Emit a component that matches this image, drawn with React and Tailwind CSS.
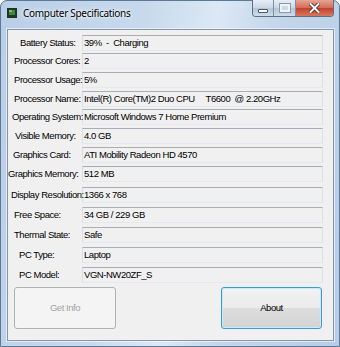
import React from "react";

const rows = [
  { label: "Battery Status:", value: "39%  -  Charging", pl: "pl-[12px]", mt: "mt-[5px]" },
  { label: "Processor Cores:", value: "2", pl: "pl-[6px]", mt: "mt-[2px]" },
  { label: "Processor Usage:", value: "5%", pl: "pl-[6px]", mt: "mt-[3px]" },
  { label: "Processor Name:", value: "Intel(R) Core(TM)2 Duo CPU     T6600  @ 2.20GHz", pl: "pl-[6px]", mt: "mt-[3px]" },
  { label: "Operating System:", value: "Microsoft Windows 7 Home Premium", pl: "pl-[4px]", mt: "mt-[2px]" },
  { label: "Visible Memory:", value: "4.0 GB", pl: "pl-[7px]", mt: "mt-[3px]" },
  { label: "Graphics Card:", value: "ATI Mobility Radeon HD 4570", pl: "pl-[5px]", mt: "mt-[3px]" },
  { label: "Graphics Memory:", value: "512 MB", pl: "pl-[0px]", mt: "mt-[3px]" },
  { label: "Display Resolution:", value: "1366 x 768", pl: "pl-[3px]", mt: "mt-[5px]" },
  { label: "Free Space:", value: "34 GB / 229 GB", pl: "pl-[6px]", mt: "mt-[4px]" },
  { label: "Thermal State:", value: "Safe", pl: "pl-[6px]", mt: "mt-[4px]" },
  { label: "PC Type:", value: "Laptop", pl: "pl-[11px]", mt: "mt-[4px]" },
  { label: "PC Model:", value: "VGN-NW20ZF_S", pl: "pl-[11px]", mt: "mt-[4px]" },
];

function AppIcon() {
  return (
    <svg width="10" height="10" viewBox="0 0 10 10">
      <rect x="0.5" y="0.5" width="9" height="9" fill="#1d3a22" stroke="#2a2a2a" />
      <rect x="2" y="2" width="6" height="5" fill="#3f8a3a" />
      <rect x="2" y="2" width="3" height="2" fill="#7cc46a" />
    </svg>
  );
}

export default function App() {
  return (
    <div className="w-[340px] h-[347px] overflow-hidden bg-white">
      <div className="w-[340px] h-[347px] flex flex-col rounded-t-[7px] border border-[#5d7796] bg-[linear-gradient(100deg,#b9cfe7_0%,#c6d8ec_35%,#dce8f4_55%,#c3d6ea_70%,#b7cde6_100%)] font-['Liberation_Sans',sans-serif]">
        {/* title bar */}
        <div className="h-[28px] flex items-start relative">
          <div className="mt-[7px] ml-[6px]">
            <AppIcon />
          </div>
          <div className="ml-[6px] mt-[5px] text-[10px] tracking-[-0.3px] leading-[14px] text-black font-['Noto_Sans',sans-serif] [text-shadow:0_0_6px_rgba(255,255,255,1),0_0_3px_rgba(255,255,255,1)]">
            Computer Specifications
          </div>
          <div className="absolute top-[-1px] right-[5px] flex h-[17px] rounded-b-[4px] border border-t-0 border-[#5e6f82] overflow-hidden">
            <div className="w-[21px] h-full flex items-end justify-center pb-[3px] bg-[linear-gradient(#e6eef6,#c9d7e6_50%,#b3c5d8_51%,#cfdcea)] border-r border-[#7d8ea2]">
              <div className="w-[10px] h-[4px] bg-white border border-[#4a5766] rounded-[1px]" />
            </div>
            <div className="w-[22px] h-full flex items-center justify-center bg-[linear-gradient(#e6eef6,#c9d7e6_50%,#b3c5d8_51%,#cfdcea)] border-r border-[#7d8ea2]">
              <div className="w-[10px] h-[8px] border-[2px] border-[#eef3f8] outline outline-1 outline-[#8a98a8] bg-[#cfd9e4]" />
            </div>
            <div className="w-[37px] h-full flex items-center justify-center bg-[linear-gradient(#e8a493,#d46a55_50%,#c2412b_51%,#d9765e)]">
              <svg width="11" height="10" viewBox="0 0 11 10">
                <path d="M1.5 1 L9.5 9 M9.5 1 L1.5 9" stroke="#4a2020" strokeWidth="3.6" strokeLinecap="square" />
                <path d="M1.5 1 L9.5 9 M9.5 1 L1.5 9" stroke="#ffffff" strokeWidth="2" strokeLinecap="square" />
              </svg>
            </div>
          </div>
        </div>
        {/* body */}
        <div className="flex flex-1 pl-[6px] pr-[5px] pb-[5px]">
          <div className="flex-1 flex flex-col bg-[#f0f0f0] border border-[#8596ab] shadow-[0_0_0_1px_rgba(255,255,255,0.55)] text-[9.5px] tracking-[-0.45px] text-black">
            {rows.map((r) => (
              <div key={r.label} className={"flex items-center h-[16px] " + r.mt}>
                <div className={"relative z-10 w-[74px] shrink-0 whitespace-nowrap leading-[12px] " + r.pl}>{r.label}</div>
                <div className="w-[241px] h-[16px] shrink-0 flex items-center pl-[1px] whitespace-pre border border-t-[#abadb3] border-l-[#dbdfe6] border-r-[#dbdfe6] border-b-[#e3e9ef] bg-[#f0f0f0] leading-[12px]">
                  {r.value}
                </div>
              </div>
            ))}
            <div className="flex justify-between mt-[4px] pl-[6px] pr-[11px]">
              <div className="w-[102px] h-[42px] flex items-center justify-center rounded-[3px] border border-[#adb2b5] bg-[#f4f4f4] text-[#a3a3a3]">
                Get Info
              </div>
              <div className="w-[101px] h-[42px] flex items-center justify-center rounded-[3px] border border-[#3c9ad6] shadow-[inset_0_0_0_1px_#c8eaf9] bg-[linear-gradient(#f2f2f2,#ebebeb_50%,#dddddd_51%,#d3d3d3)] text-black">
                About
              </div>
            </div>
          </div>
        </div>
      </div>
    </div>
  );
}
